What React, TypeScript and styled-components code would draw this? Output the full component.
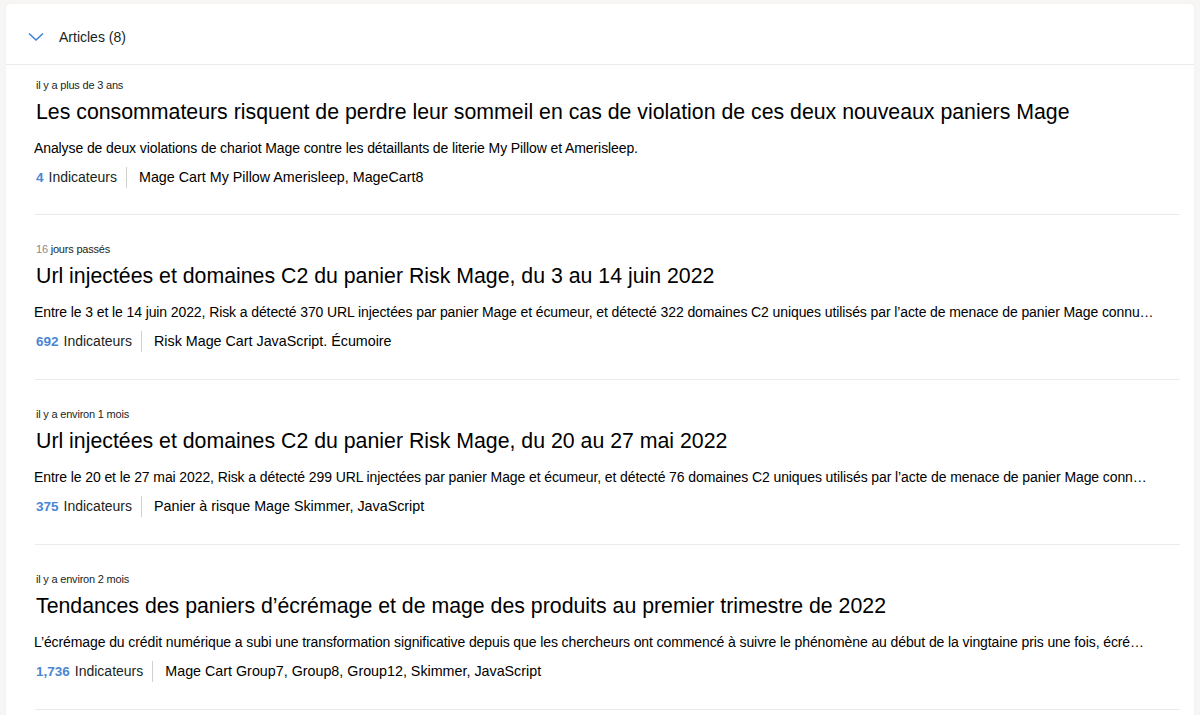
import React from "react";
import styled, { createGlobalStyle } from "styled-components";

const Global = createGlobalStyle`
  html, body { margin: 0; padding: 0; background: #f7f6f5; }
  body { font-family: "Liberation Sans", Arial, sans-serif; color: #1b1a19; }
  * { box-sizing: border-box; }
`;

const Page = styled.div`
  padding: 4px 6px 0 6px;
  height: 715px;
  overflow: hidden;
`;

const Card = styled.section`
  background: #ffffff;
  border-radius: 4px 4px 0 0;
  box-shadow: 0 0 2px rgba(0, 0, 0, 0.06);
  min-height: 720px;
`;

const Header = styled.div`
  display: flex;
  align-items: center;
  height: 61px;
  padding: 5px 0 0 22px;
  border-bottom: 1px solid #ebebeb;
  gap: 15px;
`;

const HeaderTitle = styled.span`
  font-size: 14px;
  color: #201f1e;
`;

const List = styled.div`
  padding: 0 14px 0 29px;
`;

const Item = styled.article<{ $first?: boolean }>`
  padding: ${(p) => (p.$first ? "13px 0 27px 1px" : "27px 0 28px 1px")};
  border-bottom: 1px solid #ebebeb;
  display: flex;
  flex-direction: column;
`;

const DateLine = styled.div`
  font-size: 11px;
  line-height: 14px;
  letter-spacing: -0.2px;
  color: #201f1e;
  margin-bottom: 7px;
`;

const Num = styled.span`
  color: #8a8886;
`;

const Title = styled.h2`
  margin: 0 0 13px;
  font-size: 21.3px;
  line-height: 27px;
  font-weight: 400;
  color: #000;
`;

const Desc = styled.p`
  margin: 0 0 9px -2px;
  font-size: 14px;
  line-height: 19px;
  letter-spacing: -0.1px;
  color: #000;
  white-space: nowrap;
  overflow: hidden;
  text-overflow: ellipsis;
  max-width: 1120px;
`;

const Meta = styled.div`
  display: flex;
  align-items: center;
  height: 20px;
  font-size: 14px;
`;

const Count = styled.span`
  color: #4a86d4;
  font-weight: 700;
  font-size: 13.5px;
  margin-right: 5px;
`;

const IndLabel = styled.span`
  color: #201f1e;
  padding-right: 9px;
`;

const Sep = styled.span`
  width: 1px;
  height: 21px;
  background: #d2d0ce;
  margin-right: 12px;
`;

const Tags = styled.span`
  font-size: 14.3px;
  color: #000;
`;

const Chevron = () => (
  <svg width="16" height="10" viewBox="0 0 16 10" fill="none">
    <path d="M1 1.5 L8 8 L15 1.5" stroke="#3b7fd6" strokeWidth="1.5" />
  </svg>
);

type Article = {
  date: React.ReactNode;
  title: string;
  desc: string;
  count: string;
  tags: string;
};

const articles: Article[] = [
  {
    date: "il y a plus de 3 ans",
    title:
      "Les consommateurs risquent de perdre leur sommeil en cas de violation de ces deux nouveaux paniers Mage",
    desc: "Analyse de deux violations de chariot Mage contre les détaillants de literie My Pillow et Amerisleep.",
    count: "4",
    tags: "Mage Cart My Pillow Amerisleep, MageCart8",
  },
  {
    date: (
      <>
        <Num>16</Num> jours passés
      </>
    ),
    title: "Url injectées et domaines C2 du panier Risk Mage, du 3 au 14 juin 2022",
    desc: "Entre le 3 et le 14 juin 2022, Risk a détecté 370 URL injectées par panier Mage et écumeur, et détecté 322 domaines C2 uniques utilisés par l’acte de menace de panier Mage connu dans la nature",
    count: "692",
    tags: "Risk Mage Cart JavaScript. Écumoire",
  },
  {
    date: "il y a environ 1 mois",
    title: "Url injectées et domaines C2 du panier Risk Mage, du 20 au 27 mai 2022",
    desc: "Entre le 20 et le 27 mai 2022, Risk a détecté 299 URL injectées par panier Mage et écumeur, et détecté 76 domaines C2 uniques utilisés par l’acte de menace de panier Mage connu dans la nature",
    count: "375",
    tags: "Panier à risque Mage Skimmer, JavaScript",
  },
  {
    date: "il y a environ 2 mois",
    title: "Tendances des paniers d’écrémage et de mage des produits au premier trimestre de 2022",
    desc: "L’écrémage du crédit numérique a subi une transformation significative depuis que les chercheurs ont commencé à suivre le phénomène au début de la vingtaine pris une fois, écrémage de carte",
    count: "1,736",
    tags: "Mage Cart Group7, Group8, Group12, Skimmer, JavaScript",
  },
];

export default function App() {
  return (
    <>
      <Global />
      <Page>
        <Card>
          <Header>
            <Chevron />
            <HeaderTitle>Articles (8)</HeaderTitle>
          </Header>
          <List>
            {articles.map((a, i) => (
              <Item key={i} $first={i === 0}>
                <DateLine>{a.date}</DateLine>
                <Title>{a.title}</Title>
                <Desc title={a.desc}>{a.desc}</Desc>
                <Meta>
                  <Count>{a.count}</Count>
                  <IndLabel>Indicateurs</IndLabel>
                  <Sep />
                  <Tags>{a.tags}</Tags>
                </Meta>
              </Item>
            ))}
          </List>
        </Card>
      </Page>
    </>
  );
}
